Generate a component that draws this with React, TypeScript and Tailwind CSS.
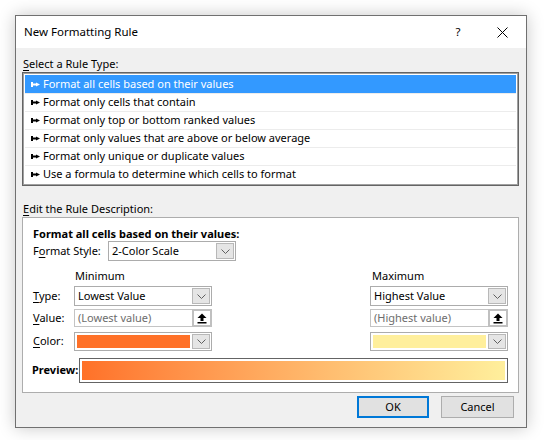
import React from "react";

const font = { fontFamily: '"Segoe UI", "Noto Sans", "Open Sans", sans-serif' };

function Chevron() {
  return (
    <svg width="9" height="5" viewBox="0 0 9 5" className="block">
      <path d="M0.5 0.5 L4.5 4.5 L8.5 0.5" fill="none" stroke="#606060" strokeWidth="1" />
    </svg>
  );
}

function RuleArrow({ white }: { white?: boolean }) {
  const c = white ? "#ffffff" : "#000000";
  return (
    <svg width="9" height="5" viewBox="0 0 9 5" className="block">
      <rect x="0" y="0" width="2" height="5" fill={c} />
      <rect x="2" y="1.5" width="3.5" height="2" fill={c} />
      <path d="M5 0.5 L9 2.5 L5 4.5 Z" fill={c} />
    </svg>
  );
}

function UploadIcon() {
  return (
    <svg width="10" height="11" viewBox="0 0 10 11" className="block">
      <path d="M0.5 5 L5 0.5 L9.5 5 Z" fill="#000" />
      <rect x="3.5" y="5" width="3" height="3" fill="#000" />
      <rect x="0.5" y="9" width="9" height="1.5" fill="#000" />
    </svg>
  );
}

function Select({ value, className }: { value: string; className: string }) {
  return (
    <div className={`flex border border-[#acacac] bg-white ${className}`}>
      <div className="flex-1 px-[3px] flex items-center text-black">{value}</div>
      <div className="w-[18px] my-[1px] mr-[1px] bg-[#e5e5e5] border border-[#b8b8b8] flex items-center justify-center">
        <Chevron />
      </div>
    </div>
  );
}

function ValueInput({ placeholder }: { placeholder: string }) {
  return (
    <div className="flex w-[138px] h-[18px] border border-[#c4c4c4] bg-white">
      <div className="flex-1 px-[3px] flex items-center text-[#6d6d6d]">{placeholder}</div>
      <div className="w-[20px] border-2 border-[#c0c0c0] bg-white flex items-center justify-center -my-[1px] -mr-[1px]">
        <UploadIcon />
      </div>
    </div>
  );
}

function ColorPicker({ color }: { color: string }) {
  return (
    <div className="flex w-[138px] h-[19px] border border-[#acacac] bg-white">
      <div className="flex-1 p-[2px]">
        <div className="w-full h-full" style={{ backgroundColor: color }} />
      </div>
      <div className="w-[18px] my-[1px] mr-[1px] bg-[#e5e5e5] border border-[#b8b8b8] flex items-center justify-center">
        <Chevron />
      </div>
    </div>
  );
}

const rules = [
  "Format all cells based on their values",
  "Format only cells that contain",
  "Format only top or bottom ranked values",
  "Format only values that are above or below average",
  "Format only unique or duplicate values",
  "Use a formula to determine which cells to format",
];

export default function App() {
  return (
    <div className="w-[545px] h-[440px] bg-white pt-[15px] pl-[15px] text-[11px] text-black" style={font}>
      <div className="w-[512px] h-[413px] flex flex-col border border-[#707070] shadow-[0_0_16px_rgba(0,0,0,0.22)]">
        {/* title bar */}
        <div className="h-[32px] bg-white flex items-center pl-[8px] shrink-0 text-[11.5px]">
          <span className="flex-1">New Formatting Rule</span>
          <span className="w-[20px] text-center mr-[29px]">?</span>
          <svg width="11" height="11" viewBox="0 0 11 11" className="mr-[18px]">
            <path d="M0.5 0.5 L10.5 10.5 M10.5 0.5 L0.5 10.5" stroke="#000" strokeWidth="1" />
          </svg>
        </div>

        {/* body */}
        <div className="flex-1 bg-[#f0f0f0] pl-[6px] pr-[7px] flex flex-col">
          <div className="h-[16px] leading-[16px] mt-[8px] pl-[1px]">
            <span className="underline underline-offset-2">S</span>elect a Rule Type:
          </div>
          <div className="h-[114px] border border-[#646464] bg-white">
            <div className="h-full border border-[#a0a0a0] p-[1px]">
              {rules.map((r, i) => (
                <div
                  key={r}
                  className={`h-[18px] flex items-center pl-[6px] gap-[3px] ${
                    i === 0 ? "bg-[#3399ff] text-white" : "border-t border-[#ececec]"
                  }`}
                >
                  <RuleArrow white={i === 0} />
                  <span>{r}</span>
                </div>
              ))}
            </div>
          </div>

          <div className="h-[16px] leading-[16px] mt-[15px] pl-[1px]">
            <span className="underline underline-offset-2">E</span>dit the Rule Description:
          </div>
          <div className="h-[176px] border border-[#adadad] bg-white pl-[10px] pr-[10px] pt-[8px] flex flex-col">
            <div className="h-[15px] leading-[15px] font-bold">Format all cells based on their values:</div>
            <div className="flex items-center h-[20px]">
              <span className="w-[75px]">
                F<span className="underline underline-offset-2">o</span>rmat Style:
              </span>
              <Select value="2-Color Scale" className="w-[128px] h-[20px]" />
            </div>

            <div className="flex mt-[7px] h-[16px] leading-[16px]">
              <span className="ml-[42px] w-[296px]">Minimum</span>
              <span className="ml-[1px]">Maximum</span>
            </div>

            <div className="flex items-center mt-[2px] h-[20px]">
              <span className="w-[41px]">
                <span className="underline underline-offset-2">T</span>ype:
              </span>
              <Select value="Lowest Value" className="w-[138px] h-[20px]" />
              <div className="w-[158px]" />
              <Select value="Highest Value" className="w-[138px] h-[20px]" />
            </div>

            <div className="flex items-center mt-[3px] h-[18px]">
              <span className="w-[41px]">
                <span className="underline underline-offset-2">V</span>alue:
              </span>
              <ValueInput placeholder="(Lowest value)" />
              <div className="w-[158px]" />
              <ValueInput placeholder="(Highest value)" />
            </div>

            <div className="flex items-center mt-[5px] h-[19px]">
              <span className="w-[41px]">
                <span className="underline underline-offset-2">C</span>olor:
              </span>
              <ColorPicker color="#ff7128" />
              <div className="w-[158px]" />
              <ColorPicker color="#ffef9c" />
            </div>

            <div className="flex items-center mt-[7px] h-[25px] -ml-[1px]">
              <span className="w-[47px] font-bold">Preview:</span>
              <div className="w-[430px] h-[25px] border border-[#646464] p-[2px] bg-white">
                <div className="w-full h-full bg-gradient-to-r from-[#ff7128] to-[#ffef9c]" />
              </div>
            </div>
          </div>

          <div className="flex justify-end mt-[3px] gap-[12px] pr-[5px]">
            <button className="w-[72px] h-[22px] border-2 border-[#0078d7] bg-[#e1e1e1]">OK</button>
            <button className="w-[73px] h-[22px] border border-[#adadad] bg-[#e1e1e1]">Cancel</button>
          </div>
        </div>
      </div>
    </div>
  );
}
